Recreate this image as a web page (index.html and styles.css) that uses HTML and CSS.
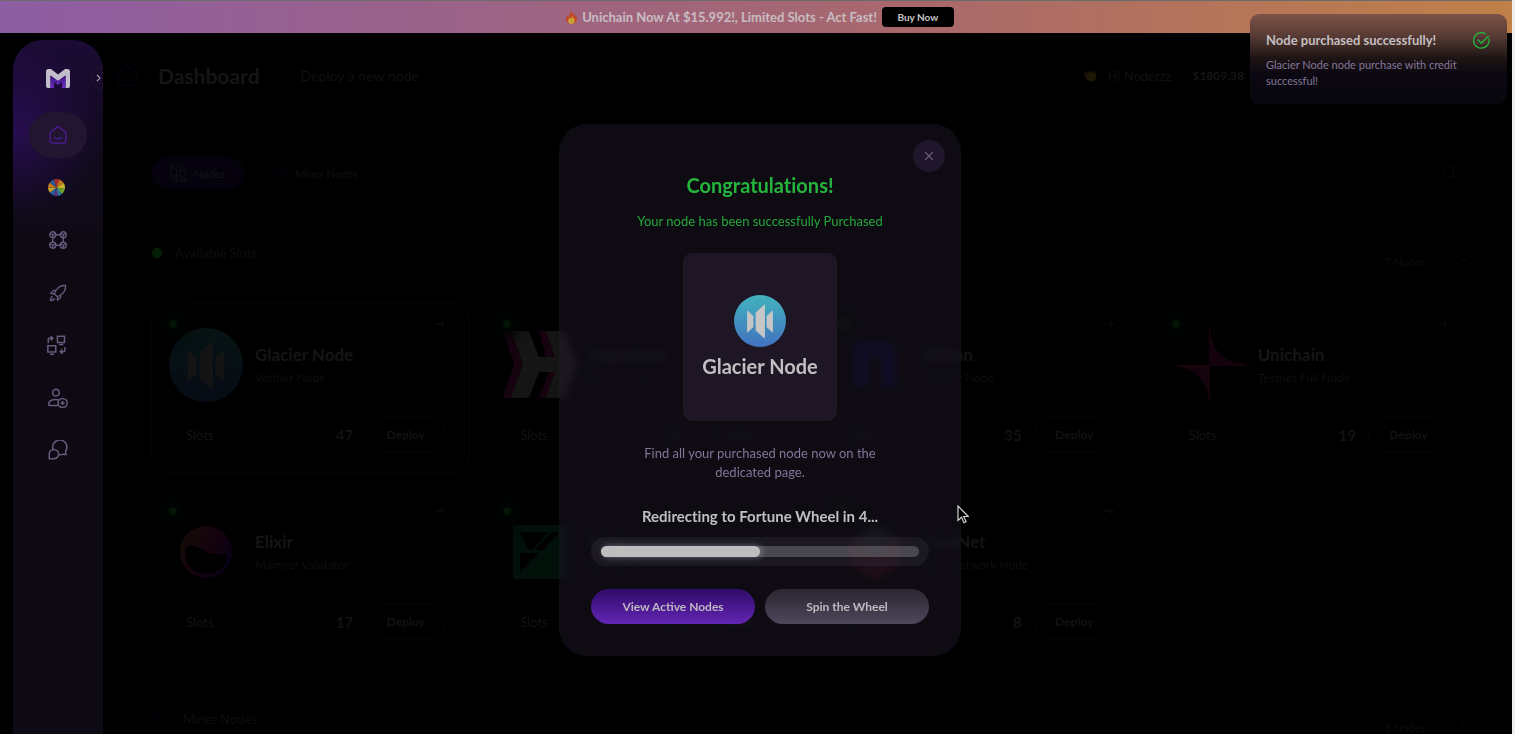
FILE: index.html
```
<!DOCTYPE html>
<html lang="en">
<head>
    <meta charset="UTF-8">
    <meta name="viewport" content="width=device-width, initial-scale=1.0">
    <title>Dashboard</title>
    <link rel="stylesheet" href="styles.css">
</head>
<body>
    <!-- shared icons -->
    <svg class="sprite" aria-hidden="true">
        <defs>
            <linearGradient id="glacier-bg" x1="0" y1="0" x2="0" y2="1">
                <stop offset="0" stop-color="#41b3bd"/>
                <stop offset="1" stop-color="#4272c0"/>
            </linearGradient>
            <linearGradient id="logo-bg" x1="0" y1="0" x2="0" y2="1">
                <stop offset="0" stop-color="#3c1580"/>
                <stop offset="1" stop-color="#6a2bc4"/>
            </linearGradient>
            <linearGradient id="elixir-bg" x1="0" y1="0.2" x2="1" y2="0.8">
                <stop offset="0" stop-color="#140d07"/>
                <stop offset="0.5" stop-color="#16020d"/>
                <stop offset="1" stop-color="#050218"/>
            </linearGradient>
        </defs>
        <symbol id="glacier" viewBox="0 0 52 52">
            <circle cx="26" cy="26" r="26" fill="url(#glacier-bg)"/>
            <path d="M13.500 16l5.500 5v11l-5.500 5zM22 17.500l8.500-7.500v33L22 35.500zM38.500 16L33 21v11l5.500 5z" fill="#c6c6c6" stroke="#c6c6c6" stroke-width=".8" stroke-linejoin="round"/>
        </symbol>
        <symbol id="home" viewBox="0 0 24 24">
            <path d="M2.500 10.500c0-1.200.5-2 1.400-2.700l6.300-4.900c1.100-.9 2.500-.9 3.600 0l6.300 4.900c.9.700 1.400 1.500 1.400 2.700v8c0 2-1.200 3.200-3.200 3.200H5.700c-2 0-3.200-1.200-3.200-3.200zM7.500 15c2.600 1.900 6.400 1.900 9 0" fill="none" stroke="currentColor" stroke-width="1.600" stroke-linecap="round"/>
        </symbol>
        <symbol id="arrow" viewBox="0 0 10 8">
            <path d="M0 4h9M6 1l3 3-3 3" fill="none" stroke="currentColor"/>
        </symbol>
        <symbol id="up" viewBox="0 0 12 8">
            <path d="M1 6.500l5-5 5 5" fill="none" stroke="currentColor"/>
        </symbol>
        <symbol id="miner" viewBox="0 0 16 16">
            <path d="M8 .5a7.500 7.500 0 1 0 0 15 7.500 7.500 0 0 0 0-15zM4 10V6l4 3 4-3v4" fill="none" stroke="currentColor"/>
        </symbol>
    </svg>

    <div class="banner">
        <svg class="fire" viewBox="0 0 12 14"><path d="M5 0c1 2 4 3.500 5 6 .3-.8.2-1.500 0-2 1.500 1.500 2 3.500 2 5 0 3-2.500 5-6 5s-6-2-6-5c0-2 1-3.500 2-4.500 0 1 .3 1.600 1 2C3 4 5 3 5 0z" fill="#bf4a24"/><path d="M6.500 5c.3 2 3 3 3 5.500S8 14 6 14s-3.700-1.200-3.700-3.200S4 8.500 4 7c.8.500 1 1 1.200 1.700C6 8 6.600 6.500 6.500 5z" fill="#c9a03a"/></svg>
        <span class="banner-text">Unichain Now At $15.992!, Limited Slots - Act Fast!</span>
        <button class="buy-btn" type="button">Buy Now</button>
    </div>

    <div class="layout">
        <aside class="sidebar">
            <svg class="brand" viewBox="0 0 24 20"><path d="M0 2.500Q0 0 2.500 0H5l7 5.500L19 0h2.500Q24 0 24 2.500V17q0 2-2 2h-2.500V6.500L12 12 4.500 6.500V19H2q-2 0-2-2z" fill="#c2bdca"/><path d="M4.500 6.500L12 12l7.500-5.500V19H16v-6l-4 3-4-3v6H4.500z" fill="url(#logo-bg)"/></svg>
            <button class="expand" type="button" aria-label="Expand menu"><svg viewBox="0 0 6 10"><path d="M1 1l4 4-4 4" fill="none" stroke="currentColor" stroke-width="1.300"/></svg></button>
            <nav class="menu">
                <a href="#" class="menu-item active" aria-label="Dashboard"><svg class="icon"><use href="#home"/></svg></a>
                <a href="#" class="menu-item" aria-label="Fortune wheel"><svg class="wheel" viewBox="-10 -10 20 20">
                    <path d="M0 0L-3.400-9.400A10 10 0 0 1 3.400-9.400z" fill="#a92a2c"/>
                    <path d="M0 0L3.400-9.400A10 10 0 0 1 8.700-5z" fill="#c5761e"/>
                    <path d="M0 0L8.700-5A10 10 0 0 1 9.800 1.700z" fill="#c9b429"/>
                    <path d="M0 0L9.800 1.700A10 10 0 0 1 6.400 7.700z" fill="#69a02d"/>
                    <path d="M0 0L6.400 7.700A10 10 0 0 1 1.500 9.900z" fill="#2a7c9b"/>
                    <path d="M0 0L1.500 9.900A10 10 0 0 1-3.400 9.400z" fill="#61347f"/>
                    <path d="M0 0L-3.400 9.400A10 10 0 0 1-8 6z" fill="#22639c"/>
                    <path d="M0 0L-8 6A10 10 0 0 1-10 0z" fill="#c9a229"/>
                    <path d="M0 0L-10 0A10 10 0 0 1-8 -6z" fill="#c5761e"/>
                    <path d="M0 0L-8-6A10 10 0 0 1-3.400-9.400z" fill="#255c95"/>
                </svg></a>
                <a href="#" class="menu-item" aria-label="Nodes"><svg class="icon small" viewBox="0 0 24 24"><path d="M8.800 5h6.400M8.800 19h6.400M5 8.800v6.400M19 8.800v6.400M5 5v3.500M5 5L2 3.500M5 5l3-1.500M19 5v3.500M19 5l-3-1.500M19 5l3-1.500M5 19v3.500M5 19l-3-1.500M5 19l3-1.500M19 19v3.500M19 19l-3-1.500M19 19l3-1.500"/><circle cx="5" cy="5" r="4"/><circle cx="19" cy="5" r="4"/><circle cx="5" cy="19" r="4"/><circle cx="19" cy="19" r="4"/></svg></a>
                <a href="#" class="menu-item" aria-label="Launch"><svg class="icon small" viewBox="0 0 24 24"><path d="M22 2c-6-.5-10 2-13 7l-2 4 4 4 4-2c5-3 7.500-7 7-13zM9.500 8.500L6 8.500 2.500 12.500l4.500.5M15.500 14.500v3.500L11.500 21.500l-.5-4.500M5 16.500c-2.500.5-3 2.500-3 5.500 3 0 5-.5 5.500-3"/></svg></a>
                <a href="#" class="menu-item" aria-label="Transfers"><svg class="icon shifted" viewBox="0 0 24 24"><path d="M12.500 1.500h8.500v7.500h-8.500zM14.500 11.500h5M1 13h9.500v7.500H1zM3.500 23h5M1.500 9.500V5.500q0-1.500 1.500-1.500h3.500M4.500 1.500L7 4 4.500 6.500M21.500 14.500v4q0 1.500-1.500 1.500h-4M18.500 17.500L16 20l2.500 2.500"/></svg></a>
                <a href="#" class="menu-item" aria-label="Referrals"><svg class="icon" viewBox="0 0 24 24"><circle cx="9.500" cy="5.500" r="4"/><path d="M12.500 21H2c-.8 0-1.200-.4-1.200-1.200 0-4 3.200-6 8.700-6 1.500 0 3 .2 4.200.6"/><circle cx="17.500" cy="18" r="5.500"/><path d="M17.500 15.500v5M15 18h5"/></svg></a>
                <a href="#" class="menu-item" aria-label="Support"><svg class="icon" viewBox="0 0 24 24"><path d="M6 11A8.500 8.500 0 1 1 21 13.500l.5 4-3.500-.5c-1.500.8-3.300.9-5 .4M1.500 22.500v-5.500a5.600 5.600 0 1 1 5.600 5.500z"/></svg></a>
            </nav>
        </aside>

        <main class="main">
            <header class="topbar">
                <svg class="home-icon"><use href="#home"/></svg>
                <h1>Dashboard</h1>
                <span class="sep"></span>
                <span class="crumb">Deploy a new node</span>
                <div class="user">
                    <svg class="hand" viewBox="0 0 14 14"><path d="M1 2l4 3-1-4 4 3 1-3 2 4 1-2c2 3 2 6 0 8-2 2-6 2-8-1L0 5l3 2z" fill="#1d1605"/></svg>
                    <span class="hello">Hi Noderzz</span>
                    <span class="balance">$1809.38</span>
                </div>
            </header>

            <div class="content">
                <div class="tabs">
                    <button class="tab active" type="button"><svg viewBox="0 0 18 18"><path d="M1 1h10l6 5v11H7l-6-5zM1 1l6 5h10M7 6v11M11 1v10.500H1M11 11.500l6 5.500" fill="none" stroke="currentColor"/></svg>Nodes</button>
                    <button class="tab" type="button"><svg><use href="#miner"/></svg>Miner Nodes</button>
                    <button class="search" type="button" aria-label="Search"><svg viewBox="0 0 14 14"><path d="M6 1a5 5 0 1 0 0 10A5 5 0 0 0 6 1zM10 10l3 3" fill="none" stroke="currentColor"/></svg></button>
                </div>

                <div class="section-head">
                    <span class="live"></span>
                    <h2>Available Slots</h2>
                    <span class="count">7 Nodes</span>
                    <svg class="chevron"><use href="#up"/></svg>
                </div>

                <div class="cards">
                    <article class="card current">
                        <div class="card-top">
                            <svg class="logo dim"><use href="#glacier"/></svg>
                            <div><h3>Glacier Node</h3><p>Verifier Node</p></div>
                        </div>
                        <div class="card-bottom"><span>Slots</span><b>47</b><button type="button">Deploy</button></div>
                        <i class="dot"></i><svg class="go"><use href="#arrow"/></svg>
                    </article>
                    <article class="card">
                        <div class="card-top">
                            <svg class="logo" viewBox="0 0 74 74"><path d="M0 3h12l12 33-12 34H0l11-34zM36 3h12l12 33-12 34H36l10-27h-9l6-13z" fill="#17020f"/><path d="M8 3h15q3 0 4 3l9 23h16L43 3h15q4 0 5 3l11 30-11 31q-1 3-5 3H43l9-26H36l-9 23q-1 3-4 3H8l12-34z" fill="#151515"/></svg>
                            <div><h3>Hyperlane</h3><p>Validator Node</p></div>
                        </div>
                        <div class="card-bottom"><span>Slots</span><b>27</b><button type="button">Deploy</button></div>
                        <i class="dot"></i><svg class="go"><use href="#arrow"/></svg>
                    </article>
                    <article class="card">
                        <div class="card-top">
                            <svg class="logo" viewBox="0 0 74 74"><path d="M17 15h33q7 0 7 7v36H44V30q0-4-4-4h-6q-4 0-4 4v28H17z" fill="#060420"/></svg>
                            <div><h3>Nillion</h3><p>Verifier Node</p></div>
                        </div>
                        <div class="card-bottom"><span>Slots</span><b>35</b><button type="button">Deploy</button></div>
                        <i class="dot"></i><svg class="go"><use href="#arrow"/></svg>
                    </article>
                    <article class="card">
                        <div class="card-top">
                            <svg class="logo" viewBox="0 0 74 74"><path d="M37 0h1c1 22 14 35 36 36v2H38v36h-1C36 53 22 39 0 38v-1h37z" fill="#14020d"/></svg>
                            <div><h3>Unichain</h3><p>Testnet Full Node</p></div>
                        </div>
                        <div class="card-bottom"><span>Slots</span><b>19</b><button type="button">Deploy</button></div>
                        <i class="dot"></i><svg class="go"><use href="#arrow"/></svg>
                    </article>
                    <article class="card">
                        <div class="card-top">
                            <svg class="logo" viewBox="0 0 74 74"><circle cx="37" cy="37" r="26" fill="url(#elixir-bg)"/><path d="M16 38c0-11 10-8 18-3s11 4 24 4c0 11-9 20-21 20s-21-9-21-21z" fill="#000"/></svg>
                            <div><h3>Elixir</h3><p>Mainnet Validator</p></div>
                        </div>
                        <div class="card-bottom"><span>Slots</span><b>17</b><button type="button">Deploy</button></div>
                        <i class="dot"></i><svg class="go"><use href="#arrow"/></svg>
                    </article>
                    <article class="card">
                        <div class="card-top">
                            <svg class="logo" viewBox="0 0 74 74"><rect x="10" y="10" width="54" height="54" rx="2" fill="#02100a"/><path d="M17 17h28L29 35h-4zM17 38h19L17 57zM49 17h8L40 35h-8z" fill="#000"/></svg>
                            <div><h3>Quai</h3><p>Full Node</p></div>
                        </div>
                        <div class="card-bottom"><span>Slots</span><b>12</b><button type="button">Deploy</button></div>
                        <i class="dot"></i><svg class="go"><use href="#arrow"/></svg>
                    </article>
                    <article class="card">
                        <div class="card-top">
                            <svg class="logo" viewBox="0 0 74 74"><path d="M37 10l28 16-4 24-24 16-24-16-4-24z" fill="#1c0508"/><path d="M37 10l24 14-24 16-24-16z" fill="#0e1210"/></svg>
                            <div><h3>GaiaNet</h3><p>Gaia Network Node</p></div>
                        </div>
                        <div class="card-bottom"><span>Slots</span><b>8</b><button type="button">Deploy</button></div>
                        <i class="dot"></i><svg class="go"><use href="#arrow"/></svg>
                    </article>
                </div>

                <div class="section-head miners">
                    <svg class="miner-icon"><use href="#miner"/></svg>
                    <h2>Miner Nodes</h2>
                    <span class="count">3 Nodes</span>
                    <svg class="chevron"><use href="#up"/></svg>
                </div>
            </div>
        </main>
    </div>

    <!-- purchase dialog -->
    <div class="overlay">
        <div class="modal" role="dialog" aria-labelledby="modal-title">
            <button class="close" type="button" aria-label="Close"><svg viewBox="0 0 8 8"><path d="M0 0l8 8M8 0L0 8" stroke="currentColor" stroke-width="1.200"/></svg></button>
            <h2 class="modal-title" id="modal-title">Congratulations!</h2>
            <p class="modal-sub">Your node has been successfully Purchased</p>
            <div class="tile">
                <svg class="tile-logo"><use href="#glacier"/></svg>
                <h3>Glacier Node</h3>
            </div>
            <p class="modal-info">Find all your purchased node now on the dedicated page.</p>
            <p class="redirect">Redirecting to Fortune Wheel in 4...</p>
            <div class="progress"><div class="track"><div class="fill" style="width: 50%"></div></div></div>
            <div class="actions">
                <button class="btn primary" type="button">View Active Nodes</button>
                <button class="btn" type="button">Spin the Wheel</button>
            </div>
        </div>
    </div>

    <div class="toast" role="status">
        <div class="toast-head">
            <strong>Node purchased successfully!</strong>
            <svg viewBox="0 0 16 16"><path d="M15 6.500A7.300 7.300 0 1 1 11.500 1.600M4.800 7.500l3 3L14.500 4" fill="none" stroke="#25b53d" stroke-width="1.300" stroke-linecap="round"/></svg>
        </div>
        <p>Glacier Node node purchase with credit successful!</p>
    </div>

    <svg class="cursor" viewBox="0 0 12 19"><path d="M1 1v14.500l3.500-3.200 2.400 5.400 2.200-1-2.400-5.200h4.600z" fill="#000" stroke="#d0d0d0" stroke-width="1.200"/></svg>
</body>
</html>
```
FILE: styles.css
```
* {
    margin: 0;
    padding: 0;
    box-sizing: border-box;
}
body {
    display: flex;
    flex-direction: column;
    height: 100vh;
    overflow: hidden;
    background-color: #000;
    border-right: 3px solid #efefef;
    color: #151515;
    font-family: Lato, "Liberation Sans", sans-serif;
    font-size: 13px;
    font-variant-ligatures: none;
}
button {
    border: 0;
    background: none;
    color: inherit;
    font-family: inherit;
    cursor: pointer;
}
h1, h2, h3 {
    font-weight: 700;
}
svg {
    display: block;
    flex: none;
}
.sprite {
    position: absolute;
    width: 0;
    height: 0;
}

/* banner */
.banner {
    display: flex;
    flex: none;
    align-items: center;
    justify-content: center;
    gap: 5px;
    height: 33px;
    border-top: 1px solid #6b6b6b;
    background: linear-gradient(90deg, #8d5da3, #a8686c 60%, #c08048);
    padding-left: 8px;
}
.fire {
    width: 11px;
    height: 13px;
}
.banner-text {
    color: #c8bcc2;
    font-weight: 700;
}
.buy-btn {
    width: 72px;
    height: 20px;
    border-radius: 4px;
    background-color: #000;
    color: #c4c4c4;
    font-size: 10px;
    font-weight: 700;
}

/* sidebar */
.layout {
    display: flex;
    flex: 1;
    min-height: 0;
    padding: 7px 0 0 13px;
}
.sidebar {
    position: relative;
    flex: none;
    width: 90px;
    padding-top: 29px;
    border-radius: 30px 30px 0 0;
    overflow: hidden;
    background:
        radial-gradient(circle at 0 90px, rgba(50, 15, 105, .65), transparent 90px),
        linear-gradient(#1c0b36, #110a1c 110px, #0d0a13 220px, #0d0a13);
}
.brand {
    width: 24px;
    height: 20px;
    margin: 0 auto;
}
.expand {
    position: absolute;
    top: 26px;
    right: -12px;
    width: 24px;
    height: 24px;
    border: 1px solid #221a2e;
    border-radius: 50%;
    color: #b8b4be;
}
.expand svg {
    width: 5px;
    height: 8px;
    margin-left: 4px;
}
.menu {
    display: flex;
    flex-direction: column;
    align-items: center;
    justify-content: space-between;
    height: 361px;
    margin-top: 23px;
}
.menu-item {
    display: flex;
    align-items: center;
    justify-content: center;
    width: 58px;
    height: 46px;
    border-radius: 23px;
    color: #675a7c;
}
.menu-item.active {
    background-color: #21152f;
    color: #4c1b96;
}
.icon {
    width: 20px;
    height: 20px;
    fill: none;
    stroke: currentColor;
    stroke-width: 1.8px;
}
.icon.small {
    width: 18px;
    height: 18px;
}
.icon.shifted,
.wheel {
    margin-right: 3px;
}
.wheel {
    width: 17px;
    height: 17px;
}

/* main */
.main {
    flex: 1;
    min-width: 0;
}
.topbar {
    display: flex;
    align-items: center;
    height: 71px;
    padding: 0 268px 0 12px;
}
.home-icon {
    width: 24px;
    height: 24px;
    color: #07030e;
}
.topbar h1 {
    margin-left: 19px;
    font-size: 21px;
}
.sep {
    width: 3px;
    height: 3px;
    margin: 0 19px;
    border-radius: 50%;
    background-color: #070707;
}
.crumb, .hello {
    color: #101011;
}
.crumb {
    font-size: 14px;
}
.user {
    display: flex;
    align-items: center;
    gap: 10px;
    margin-left: auto;
}
.hand {
    width: 14px;
    height: 14px;
}
.balance {
    margin-left: 11px;
    font-size: 12px;
    font-weight: 700;
}
.content {
    padding: 46px 39px 0 48px;
}
.tabs {
    display: flex;
    align-items: center;
    height: 32px;
}
.tab {
    display: flex;
    align-items: center;
    gap: 7px;
    height: 32px;
    padding: 0 19px;
    border-radius: 16px;
    color: #101011;
    font-size: 11px;
}
.tab svg {
    width: 17px;
    height: 17px;
}
.tab + .tab {
    margin-left: 8px;
}
.tab + .tab svg {
    color: #060410;
}
.tab.active {
    background-color: #05020d;
    color: #14121a;
}
.search {
    width: 14px;
    height: 14px;
    margin: 0 16px 0 auto;
    color: #0b0b0b;
}
.section-head {
    display: flex;
    align-items: center;
    height: 36px;
    margin: 50px 0 27px;
    padding: 0 3px 0 1px;
    color: #0e0e0f;
}
.section-head h2 {
    margin: 0 auto 8px 13px;
    font-size: 13px;
    font-weight: 400;
}
.live {
    width: 10px;
    height: 10px;
    margin-bottom: 8px;
    border-radius: 50%;
    background-color: #051f04;
    box-shadow: 0 0 12px 4px #010500;
}
.count {
    margin-top: 8px;
    margin-right: 33px;
    font-size: 11px;
}
.chevron {
    width: 12px;
    height: 8px;
    margin-top: 8px;
}
.section-head.miners {
    margin-top: 44px;
}
.miner-icon {
    width: 18px;
    height: 18px;
    margin-bottom: 8px;
    color: #03020a;
}

/* node cards */
.cards {
    display: grid;
    grid-template-columns: repeat(4, 1fr);
    gap: 15px;
}
.card {
    position: relative;
    height: 172px;
    padding: 25px 23px 22px 17px;
    border: 1px solid transparent;
    border-radius: 20px;
}
.card.current {
    border-color: #08040f;
}
.card-top {
    display: flex;
    align-items: center;
    gap: 12px;
}
.logo {
    width: 74px;
    height: 74px;
}
.logo.dim {
    opacity: .1;
}
.card h3 {
    margin-top: 2px;
    font-size: 17px;
    line-height: 24px;
}
.card p {
    color: #0e0e0f;
    font-size: 12px;
    line-height: 22px;
}
.card-bottom {
    display: flex;
    align-items: center;
    margin: 15px 0 0 17px;
    color: #121213;
}
.card-bottom span {
    margin-right: auto;
}
.card-bottom b {
    font-size: 15px;
}
.card-bottom button {
    width: 81px;
    height: 35px;
    margin-left: 12px;
    border: 1px solid #08040f;
    border-radius: 18px;
    font-size: 12px;
    font-weight: 700;
}
.dot {
    position: absolute;
    top: 17px;
    left: 17px;
    width: 8px;
    height: 8px;
    border-radius: 50%;
    background-color: #031406;
    box-shadow: 0 0 14px 9px #010602;
}
.go {
    position: absolute;
    top: 17px;
    right: 24px;
    width: 10px;
    height: 8px;
    color: #0f0f10;
}

/* purchase dialog */
.overlay {
    position: fixed;
    inset: 0;
    display: flex;
    align-items: center;
    justify-content: center;
    padding: 46px 0 0 5px;
}
.modal {
    position: relative;
    display: flex;
    flex-direction: column;
    align-items: center;
    width: 402px;
    padding: 47px 32px 32px;
    border-radius: 28px;
    background-color: rgba(40, 30, 54, .36);
    backdrop-filter: blur(4px);
    text-align: center;
}
.close {
    position: absolute;
    top: 16px;
    right: 16px;
    width: 32px;
    height: 32px;
    border-radius: 50%;
    background-color: #20162b;
    color: #6f6185;
}
.close svg {
    width: 8px;
    height: 8px;
    margin: 0 auto;
}
.modal-title {
    color: #25b53d;
    font-size: 20px;
    line-height: 28px;
}
.modal-sub {
    margin-top: 12px;
    color: #25a83a;
    line-height: 20px;
}
.tile {
    display: flex;
    flex-direction: column;
    align-items: center;
    width: 154px;
    height: 168px;
    margin-top: 22px;
    padding-top: 42px;
    border-radius: 9px;
    background-color: #1e1525;
}
.tile-logo {
    width: 52px;
    height: 52px;
}
.tile h3 {
    margin-top: 5px;
    color: #c0bfc1;
    font-size: 20px;
    line-height: 28px;
}
.modal-info {
    width: 250px;
    margin-top: 23px;
    color: #82769a;
    line-height: 19px;
}
.redirect {
    margin-top: 22px;
    color: #c0bfc1;
    font-size: 15px;
    font-weight: 700;
    line-height: 24px;
}
.progress {
    width: 100%;
    margin-top: 9px;
    padding: 9px 10px;
    border-radius: 15px;
    background-color: rgba(60, 56, 72, .3);
}
.track {
    height: 11px;
    border-radius: 6px;
    background-color: rgba(160, 160, 160, .35);
}
.fill {
    height: 11px;
    border-radius: 6px;
    background-color: #bebebe;
    box-shadow: 2px 0 6px rgba(190, 190, 190, .5);
}
.actions {
    display: flex;
    gap: 10px;
    width: 100%;
    margin-top: 23px;
}
.btn {
    flex: 1;
    height: 35px;
    border-radius: 18px;
    background: linear-gradient(#2b2630, #4f475c);
    color: #bdb9c1;
    font-size: 12px;
    font-weight: 700;
}
.btn.primary {
    background: linear-gradient(#300b68, #6325b4);
}

/* toast */
.toast {
    position: fixed;
    top: 14px;
    right: 8px;
    width: 257px;
    padding: 16px 17px 15px 16px;
    border-radius: 9px;
    background: linear-gradient(#7d5348, #573b34 22px, #1d1413 44px, #0c0812 60px, #08060d);
}
.toast-head {
    display: flex;
    align-items: center;
    justify-content: space-between;
    height: 20px;
    color: #c4bfc0;
}
.toast-head svg {
    width: 17px;
    height: 17px;
}
.toast p {
    width: 206px;
    margin-top: 7px;
    color: #84779a;
    font-size: 11px;
    line-height: 16px;
}

.cursor {
    position: fixed;
    top: 505px;
    left: 957px;
    width: 12px;
    height: 19px;
}
```
